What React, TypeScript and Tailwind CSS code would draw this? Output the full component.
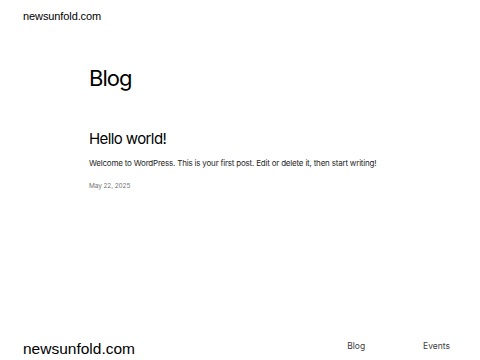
export default function App() {
  return (
    <div className="h-[360px] w-[480px] overflow-hidden bg-white text-black" style={{ fontFamily: "Inter, 'Liberation Sans', sans-serif" }}>
      <header className="px-[23px] pt-[10px]">
        <div className="text-[11px] font-medium leading-[13px] tracking-[-0.1px]" style={{ fontFamily: "'Liberation Sans', Arial, sans-serif" }}>
          newsunfold.com
        </div>
      </header>

      <main className="px-[89px]">
        <h1 className="mt-[41px] text-[22px] leading-[28px] tracking-[-1px]">Blog</h1>
        <article className="mt-[37px]">
          <h2 className="text-[15px] leading-[20px] tracking-[-0.6px]">Hello world!</h2>
          <p className="mt-[8px] text-[8px] leading-[12px] tracking-[-0.2px] text-neutral-800">
            Welcome to WordPress. This is your first post. Edit or delete it, then start writing!
          </p>
          <div className="mt-[13px] text-[6.5px] leading-[8px] tracking-[-0.1px] text-neutral-500">May 22, 2025</div>
        </article>
      </main>

      <footer className="mt-[148px] flex items-start justify-between pl-[23px] pr-[30px]">
        <div className="mt-[2px] text-[15.5px] font-medium leading-[18px]" style={{ fontFamily: "'Liberation Sans', Arial, sans-serif" }}>
          newsunfold.com
        </div>
        <nav className="mt-[3px] flex gap-[58px] text-[8.5px] leading-[10px] text-neutral-700">
          <span>Blog</span>
          <span>Events</span>
        </nav>
      </footer>
    </div>
  );
}
